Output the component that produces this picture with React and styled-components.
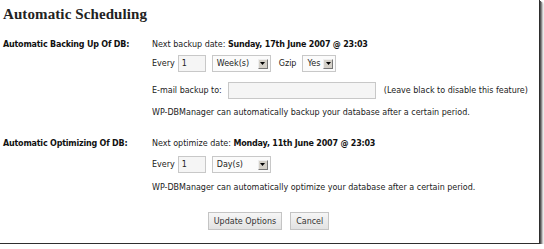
import React from 'react'
import styled, { createGlobalStyle } from 'styled-components'

const GlobalStyle = createGlobalStyle`
  html, body {
    margin: 0;
    padding: 0;
    background: #fff;
  }
  body {
    font-family: "DejaVu Sans", "Liberation Sans", sans-serif;
    font-size: 8px;
    color: #222;
  }
`

export default function App() {
  return (
    <>
      <GlobalStyle />
      <Frame>
        <Title>Automatic Scheduling</Title>
        <FormTable>
          <Label>Automatic Backing Up Of DB:</Label>
          <Field>
            <Line>
              Next backup date:&nbsp;<Strong>Sunday, 17th June 2007 @ 23:03</Strong>
            </Line>
            <Line $top={2}>
              <span>Every</span>
              <TextBox $width={28} defaultValue="1" />
              <Select $width={59}>
                <span>Week(s)</span>
                <Arrow />
              </Select>
              <Gap $w={8} />
              <span>Gzip</span>
              <Select $width={34}>
                <span>Yes</span>
                <Arrow />
              </Select>
            </Line>
            <Line $top={10}>
              <span>E-mail backup to:</span>
              <TextBox $width={148} $left={6} />
              <Note>(Leave black to disable this feature)</Note>
            </Line>
            <Line $top={5}>
              WP-DBManager can automatically backup your database after a certain period.
            </Line>
          </Field>

          <Label $top={14}>Automatic Optimizing Of DB:</Label>
          <Field $top={14}>
            <Line>
              Next optimize date:&nbsp;<Strong>Monday, 11th June 2007 @ 23:03</Strong>
            </Line>
            <Line $top={4}>
              <span>Every</span>
              <TextBox $width={28} defaultValue="1" />
              <Select $width={59}>
                <span>Day(s)</span>
                <Arrow />
              </Select>
            </Line>
            <Line $top={6}>
              WP-DBManager can automatically optimize your database after a certain period.
            </Line>
          </Field>
        </FormTable>
        <Buttons>
          <Button>Update Options</Button>
          <Button>Cancel</Button>
        </Buttons>
      </Frame>
    </>
  )
}

function Arrow() {
  return (
    <ArrowBox>
      <svg width="5" height="3" viewBox="0 0 5 3">
        <path d="M0 0 H5 L2.5 3 Z" fill="#000" />
      </svg>
    </ArrowBox>
  )
}

const Frame = styled.div`
  width: 540px;
  height: 244px;
  box-sizing: border-box;
  border-right: 1px solid #2e2e2e;
  border-bottom: 1px solid #2e2e2e;
  box-shadow: 1px 1px 0 #555, 2px 2px 1px #888, 3px 3px 2px #bbb;
`

const Title = styled.h2`
  margin: 0;
  padding: 6px 0 0 3px;
  font-family: "Liberation Serif", serif;
  font-size: 15px;
  font-weight: bold;
  letter-spacing: 0.1px;
  color: #222;
  line-height: 17px;
`

const FormTable = styled.div`
  display: grid;
  grid-template-columns: 152px 1fr;
  margin-top: 13px;
`

const Label = styled.div`
  padding-left: 3px;
  margin-top: ${p => p.$top || 0}px;
  font-weight: bold;
  letter-spacing: -0.2px;
  color: #111;
  line-height: 17px;
  height: 17px;
`

const Field = styled.div`
  display: flex;
  flex-direction: column;
  margin-top: ${p => p.$top || 0}px;
`

const Line = styled.div`
  display: flex;
  align-items: center;
  min-height: 17px;
  margin-top: ${p => p.$top || 0}px;
  white-space: nowrap;
`

const Strong = styled.b`
  color: #111;
  letter-spacing: -0.2px;
`

const TextBox = styled.input`
  width: ${p => p.$width}px;
  height: 17px;
  box-sizing: border-box;
  margin: 0 0 0 ${p => p.$left ?? 3}px;
  padding: 0 3px;
  border: 1px solid #c8c8c8;
  background: #f5f5f5;
  font-family: inherit;
  font-size: 8px;
  color: #222;
  outline: none;
`

const Select = styled.div`
  width: ${p => p.$width}px;
  height: 17px;
  box-sizing: border-box;
  margin-left: 6px;
  border: 1px solid #c8c8c8;
  background: #fbfbfb;
  display: flex;
  align-items: center;
  justify-content: space-between;
  padding: 0 2px 0 4px;
  font-size: 8px;
`

const ArrowBox = styled.span`
  width: 10px;
  height: 10px;
  box-sizing: border-box;
  border: 1px solid #777;
  border-top-color: #eee;
  border-left-color: #eee;
  background: #d4d0c8;
  display: flex;
  align-items: center;
  justify-content: center;
`

const Gap = styled.span`
  width: ${p => p.$w}px;
`

const Note = styled.span`
  margin-left: 8px;
`

const Buttons = styled.div`
  display: flex;
  justify-content: center;
  gap: 8px;
  margin-top: 16px;
  padding-right: 2px;
`

const Button = styled.button`
  height: 18px;
  padding: 0 5px;
  border: 1px solid #c4c4c4;
  background: linear-gradient(#f6f6f6, #e2e2e2);
  font-family: "DejaVu Sans", sans-serif;
  font-size: 8px;
  color: #333;
`
